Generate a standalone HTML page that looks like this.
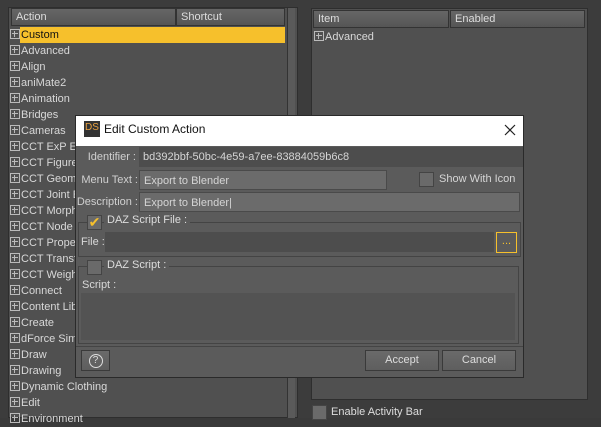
<!DOCTYPE html>
<html><head><meta charset="utf-8"><style>
*{margin:0;padding:0;box-sizing:border-box}
body{width:601px;height:418px;overflow:hidden;background:#3a3a3a;font-family:"Liberation Sans",sans-serif;font-size:11px;color:#d8d8d8;position:relative}
.a{position:absolute}
.hdr{background:linear-gradient(#666,#555);border:1px solid #333;color:#ddd;padding-left:4px;line-height:16px}
.row{position:absolute;left:10px;height:16px;line-height:16px;color:#d8d8d8;white-space:nowrap}
.pl{display:inline-block;width:10px;height:10px;border:1px solid #bbb;position:relative;vertical-align:-1px;margin-right:1px}
.pl:before{content:"";position:absolute;left:1px;top:3px;width:6px;height:1px;background:#bbb}
.pl:after{content:"";position:absolute;left:3px;top:1px;width:1px;height:6px;background:#bbb}
.fld{position:absolute;height:20px;line-height:20px;padding-left:4px;color:#d5d5d5}
.lab{position:absolute;text-align:right;color:#d0d0d0;line-height:20px}
.cb{position:absolute;width:15px;height:15px;background:#6a6a6a;border:1px solid #444}
.btn{position:absolute;height:21px;background:linear-gradient(#6a6a6a,#5e5e5e);border:1px solid #3a3a3a;text-align:center;line-height:19px;color:#ddd}
</style></head><body>
<div class="a" style="left:0;top:0;width:300px;height:418px;background:#3c3c3c"></div>
<div class="a" style="left:8px;top:7px;width:290px;height:411px;background:#505050;border:1px solid #2e2e2e"></div>
<div class="a hdr" style="left:11px;top:8px;width:165px;height:18px">Action</div>
<div class="a hdr" style="left:176px;top:8px;width:109px;height:18px">Shortcut</div>
<div class="a" style="left:287px;top:8px;width:8px;height:410px;background:#5a5a5a;border-left:1px solid #333"></div>
<div class="a" style="left:20px;top:27px;width:265px;height:16px;background:#f6c02c"></div>
<div class="row" style="top:27px;color:#111"><span class="pl"></span>Custom</div>
<div class="row" style="top:43px"><span class="pl"></span>Advanced</div>
<div class="row" style="top:59px"><span class="pl"></span>Align</div>
<div class="row" style="top:75px"><span class="pl"></span>aniMate2</div>
<div class="row" style="top:91px"><span class="pl"></span>Animation</div>
<div class="row" style="top:107px"><span class="pl"></span>Bridges</div>
<div class="row" style="top:123px"><span class="pl"></span>Cameras</div>
<div class="row" style="top:139px"><span class="pl"></span>CCT ExP Ex</div>
<div class="row" style="top:155px"><span class="pl"></span>CCT Figure</div>
<div class="row" style="top:171px"><span class="pl"></span>CCT Geome</div>
<div class="row" style="top:187px"><span class="pl"></span>CCT Joint E</div>
<div class="row" style="top:203px"><span class="pl"></span>CCT Morph</div>
<div class="row" style="top:219px"><span class="pl"></span>CCT Node V</div>
<div class="row" style="top:235px"><span class="pl"></span>CCT Proper</div>
<div class="row" style="top:251px"><span class="pl"></span>CCT Transf</div>
<div class="row" style="top:267px"><span class="pl"></span>CCT Weigh</div>
<div class="row" style="top:283px"><span class="pl"></span>Connect</div>
<div class="row" style="top:299px"><span class="pl"></span>Content Lib</div>
<div class="row" style="top:315px"><span class="pl"></span>Create</div>
<div class="row" style="top:331px"><span class="pl"></span>dForce Sim</div>
<div class="row" style="top:347px"><span class="pl"></span>Draw</div>
<div class="row" style="top:363px"><span class="pl"></span>Drawing</div>
<div class="row" style="top:379px"><span class="pl"></span>Dynamic Clothing</div>
<div class="row" style="top:395px"><span class="pl"></span>Edit</div>
<div class="row" style="top:411px"><span class="pl"></span>Environment</div>
<div class="a" style="left:300px;top:0;width:301px;height:418px;background:#3c3c3c"></div>
<div class="a" style="left:311px;top:8px;width:277px;height:392px;background:#505050;border:1px solid #2e2e2e"></div>
<div class="a hdr" style="left:313px;top:10px;width:136px;height:18px">Item</div>
<div class="a hdr" style="left:450px;top:10px;width:135px;height:18px">Enabled</div>
<div class="row" style="left:314px;top:29px"><span class="pl"></span>Advanced</div>
<div class="cb" style="left:312px;top:405px"></div>
<div class="a" style="left:331px;top:406px;color:#ddd">Enable Activity Bar</div>
<div class="a" style="left:75px;top:115px;width:449px;height:263px;background:#5b5b5b;border:1px solid #2a2a2a"></div>
<div class="a" style="left:76px;top:116px;width:447px;height:30px;background:#fff"></div>
<div class="a" style="left:84px;top:121px;width:16px;height:16px;background:#333;color:#e8a040;font-size:10px;line-height:14px;text-align:center">DS</div>
<div class="a" style="left:104px;top:122px;color:#111;font-size:12px">Edit Custom Action</div>
<svg class="a" style="left:504px;top:124px" width="12" height="12"><path d="M1 1L11 11M11 1L1 11" stroke="#222" stroke-width="1.2"/></svg>
<div class="lab" style="left:76px;top:147px;width:60px">Identifier :</div>
<div class="fld" style="left:139px;top:147px;width:384px;background:#4d4d4d">bd392bbf-50bc-4e59-a7ee-83884059b6c8</div>
<div class="lab" style="left:76px;top:170px;width:62px">Menu Text :</div>
<div class="fld" style="left:139px;top:170px;width:248px;background:#6b6b6b;border:1px solid #4a4a4a">Export to Blender</div>
<div class="cb" style="left:419px;top:172px"></div>
<div class="a" style="left:439px;top:173px;color:#d5d5d5">Show With Icon</div>
<div class="lab" style="left:76px;top:192px;width:62px">Description :</div>
<div class="fld" style="left:139px;top:192px;width:381px;background:#6b6b6b;border:1px solid #4a4a4a">Export to Blender|</div>
<div class="a" style="left:78px;top:222px;width:443px;height:35px;border:1px solid #444"></div>
<div class="cb" style="left:87px;top:215px;color:#f6c02c;font-size:14px;line-height:13px;text-align:center">✔</div>
<div class="a" style="left:104px;top:214px;padding:0 3px;background:#5b5b5b;color:#ddd">DAZ Script File :</div>
<div class="a" style="left:81px;top:236px">File :</div>
<div class="fld" style="left:105px;top:232px;width:389px;background:#4d4d4d"></div>
<div class="a" style="left:496px;top:232px;width:21px;height:21px;border:1px solid #f6c02c;color:#f6c02c;text-align:center;line-height:17px">...</div>
<div class="a" style="left:78px;top:266px;width:441px;height:78px;border:1px solid #444"></div>
<div class="cb" style="left:87px;top:260px"></div>
<div class="a" style="left:104px;top:259px;padding:0 3px;background:#5b5b5b;color:#ddd">DAZ Script :</div>
<div class="a" style="left:82px;top:279px">Script :</div>
<div class="a" style="left:81px;top:293px;width:434px;height:47px;background:#535353"></div>
<div class="a" style="left:76px;top:346px;width:447px;height:1px;background:#444"></div>
<div class="btn" style="left:81px;top:350px;width:29px"><span style="display:inline-block;width:14px;height:14px;border:1px solid #ddd;border-radius:50%;line-height:12px;font-size:10px;margin-top:2px">?</span></div>
<div class="btn" style="left:365px;top:350px;width:74px">Accept</div>
<div class="btn" style="left:442px;top:350px;width:74px">Cancel</div>
</body></html>
